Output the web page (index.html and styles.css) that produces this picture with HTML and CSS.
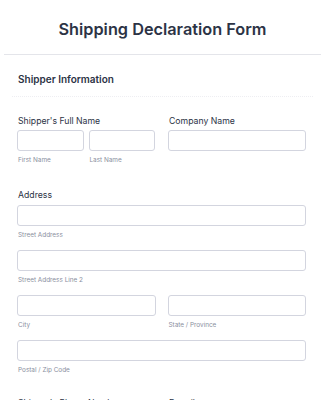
FILE: index.html
```html
<!DOCTYPE html>
<html lang="en">
<head>
  <meta charset="UTF-8" />
  <meta name="viewport" content="width=device-width, initial-scale=1" />
  <title>Shipping Declaration Form</title>
  <link rel="stylesheet" href="styles.css">
</head>
<body>
  <header class="form-header">
    <h1>Shipping Declaration Form</h1>
  </header>
  <div class="section-head">
    <h2>Shipper Information</h2>
  </div>
  <main class="form-body">
    <div class="row">
      <div class="field">
        <label class="label">Shipper's Full Name</label>
        <div class="pair">
          <div class="sub">
            <input type="text" />
            <span class="sublabel">First Name</span>
          </div>
          <div class="sub">
            <input type="text" />
            <span class="sublabel">Last Name</span>
          </div>
        </div>
      </div>
      <div class="field">
        <label class="label">Company Name</label>
        <input type="text" />
      </div>
    </div>

    <div class="field address">
      <label class="label">Address</label>
      <div class="sub">
        <input type="text" />
        <span class="sublabel">Street Address</span>
      </div>
      <div class="sub">
        <input type="text" />
        <span class="sublabel">Street Address Line 2</span>
      </div>
      <div class="row tight">
        <div class="sub">
          <input type="text" />
          <span class="sublabel">City</span>
        </div>
        <div class="sub">
          <input type="text" />
          <span class="sublabel">State / Province</span>
        </div>
      </div>
      <div class="sub">
        <input type="text" />
        <span class="sublabel">Postal / Zip Code</span>
      </div>
    </div>

    <div class="row">
      <div class="field">
        <label class="label">Shipper's Phone Number</label>
      </div>
      <div class="field">
        <label class="label">E-mail</label>
      </div>
    </div>
  </main>
</body>
</html>
```

FILE: styles.css
```css
body {
  font-family: Inter, 'Noto Sans', sans-serif;
  background: #fff;
  color: #2c3345;
  margin: 0;
  padding: 0;
}
.form-header {
  margin: 0 4px;
  padding: 18px 0 14px;
  border-bottom: 1px solid #e4e5ea;
  text-align: center;
}
.form-header h1 {
  margin: 0;
  font-size: 16.3px;
  line-height: 22px;
  font-weight: 600;
}
.section-head {
  margin: 0 12px;
  padding: 17px 6px 10px;
  border-bottom: 1px dotted #eeeef2;
}
.section-head h2 {
  margin: 0;
  font-size: 10px;
  line-height: 14px;
  font-weight: 600;
}
.form-body {
  padding: 18px 19px 0 17px;
}
.row {
  display: grid;
  grid-template-columns: 1fr 1fr;
  column-gap: 13px;
}
.row.tight {
  column-gap: 12px;
}
.field {
  margin-bottom: 24px;
}
.field.address {
  margin-bottom: 22px;
}
.label {
  display: block;
  padding-left: 1px;
  font-size: 8.7px;
  line-height: 12px;
  font-weight: 400;
  margin-bottom: 3px;
}
.address .label {
  margin-bottom: 4px;
}
.pair {
  display: grid;
  grid-template-columns: 1fr 1fr;
  column-gap: 5px;
}
.sub {
  margin-bottom: 10px;
}
.field .sub:last-child,
.pair .sub {
  margin-bottom: 0;
}
input[type="text"] {
  display: block;
  box-sizing: border-box;
  width: 100%;
  height: 21px;
  margin: 0;
  border: 1px solid #d3d5df;
  border-radius: 3px;
  background: #fff;
}
.sublabel {
  display: block;
  margin-top: 5px;
  padding-left: 1px;
  font-size: 6.4px;
  line-height: 9px;
  color: #8a8fa0;
}
```
